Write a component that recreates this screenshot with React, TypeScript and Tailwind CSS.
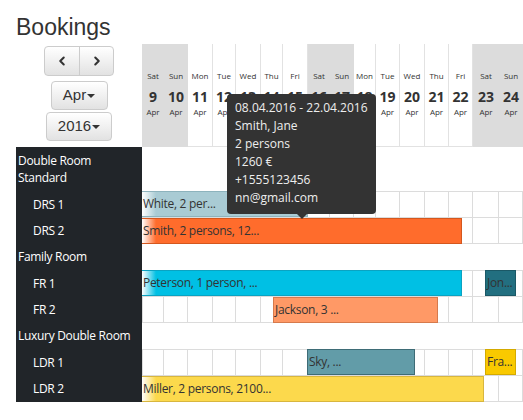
import { ChevronLeft, ChevronRight } from "lucide-react"

type Bar = { left: number; width: number; label: string; cls: string }
type Row = { kind: "group" | "room"; label: string; first?: boolean; bars?: Bar[] }

const days = [
  { name: "Sat", num: 9, weekend: true },
  { name: "Sun", num: 10, weekend: true },
  { name: "Mon", num: 11 },
  { name: "Tue", num: 12 },
  { name: "Wed", num: 13 },
  { name: "Thu", num: 14 },
  { name: "Fri", num: 15 },
  { name: "Sat", num: 16, weekend: true },
  { name: "Sun", num: 17, weekend: true },
  { name: "Mon", num: 18 },
  { name: "Tue", num: 19 },
  { name: "Wed", num: 20 },
  { name: "Thu", num: 21 },
  { name: "Fri", num: 22 },
  { name: "Sat", num: 23, weekend: true },
  { name: "Sun", num: 24, weekend: true },
]

const rows: Row[] = [
  { kind: "group", label: "Double Room Standard" },
  {
    kind: "room",
    label: "DRS 1",
    first: true,
    bars: [
      {
        left: 0,
        width: 166,
        label: "White, 2 per...",
        cls: "bg-[linear-gradient(to_right,#fff,#a9cbd4_14px)] border-[#8db3bd] border-l-0",
      },
    ],
  },
  {
    kind: "room",
    label: "DRS 2",
    bars: [
      {
        left: 0,
        width: 320,
        label: "Smith, 2 persons, 12...",
        cls: "bg-[linear-gradient(to_right,#fff,#ff6c2c_14px)] border-[#d4571e] border-l-0",
      },
    ],
  },
  { kind: "group", label: "Family Room" },
  {
    kind: "room",
    label: "FR 1",
    first: true,
    bars: [
      {
        left: 0,
        width: 320,
        label: "Peterson, 1 person, ...",
        cls: "bg-[linear-gradient(to_right,#fff,#00c0e4_14px)] border-[#0aa3c2] border-l-0",
      },
      { left: 343, width: 31, label: "Jon...", cls: "bg-[#226f80] border-[#1b5866]" },
    ],
  },
  {
    kind: "room",
    label: "FR 2",
    bars: [{ left: 131, width: 165, label: "Jackson, 3 ...", cls: "bg-[#ff9966] border-[#d67a4c]" }],
  },
  { kind: "group", label: "Luxury Double Room" },
  {
    kind: "room",
    label: "LDR 1",
    first: true,
    bars: [
      { left: 165, width: 108, label: "Sky, ...", cls: "bg-[#629ca8] border-[#3e6c76]" },
      { left: 343, width: 31, label: "Fra...", cls: "bg-[#f9c900] border-[#d4aa00]" },
    ],
  },
  {
    kind: "room",
    label: "LDR 2",
    bars: [
      {
        left: 0,
        width: 342,
        label: "Miller, 2 persons, 2100...",
        cls: "bg-[linear-gradient(to_right,#fff,#fcd94c_14px)] border-[#d8b63e] border-l-0",
      },
    ],
  },
]

function Caret() {
  return <span className="ml-[1px] inline-block border-x-[4px] border-t-[4px] border-x-transparent border-t-[#333]" />
}

function HeaderCell({ name, num, weekend }: { name: string; num: number; weekend?: boolean }) {
  return (
    <div
      className={
        weekend
          ? "flex flex-col items-center pt-[26px] bg-[#dcdcdc]"
          : "flex flex-col items-center pt-[26px] bg-white border-r border-b border-[#e2e2e2]"
      }
    >
      <span className="text-[8px] leading-[12px]">{name}</span>
      <span className="mt-[6px] text-[14px] leading-[18px] font-bold">{num}</span>
      <span className="text-[8px] leading-[12px]">Apr</span>
    </div>
  )
}

function RoomRow({ row }: { row: Row }) {
  if (row.kind === "group") {
    return (
      <div className="flex">
        <div
          className={
            row.label === "Double Room Standard"
              ? "w-[126px] h-[44px] bg-[#212529] text-white pl-[2px] pt-[5px] leading-[17px]"
              : "w-[126px] h-[26px] bg-[#212529] text-white pl-[2px] pt-[4px] leading-[17px] whitespace-nowrap"
          }
        >
          {row.label}
        </div>
        <div className="w-[381px]" />
      </div>
    )
  }

  return (
    <div className="flex">
      <div className="w-[126px] bg-[#212529] text-white pl-[17px] flex items-center">{row.label}</div>
      <div className="relative w-[381px]">
        <div
          className={
            row.first
              ? "grid grid-cols-[22px_24px_25px_23px_25px_22px_25px_22px_24px_22px_24px_25px_24px_24px_26px_24px] border-t border-[#dcdcdc]"
              : "grid grid-cols-[22px_24px_25px_23px_25px_22px_25px_22px_24px_22px_24px_25px_24px_24px_26px_24px]"
          }
        >
          {days.map((d, i) => (
            <div
              key={i}
              className={
                i === 0
                  ? "h-[26px] border-l border-r border-b border-[#dcdcdc]"
                  : "h-[26px] border-r border-b border-[#dcdcdc]"
              }
            />
          ))}
        </div>
        {row.bars?.map((b, i) => (
          <div
            key={i}
            className={"absolute top-0 h-[26px] border flex items-center pl-[1px] overflow-hidden whitespace-nowrap text-[#333] " + b.cls}
            style={{ left: b.left, width: b.width }}
          >
            {b.label}
          </div>
        ))}
      </div>
    </div>
  )
}

export default function App() {
  return (
    <div className="relative w-[523px] h-[420px] bg-white overflow-hidden pl-4 pt-[14px] text-[#333]">
      <h1 className="font-['Liberation_Sans',Arial,sans-serif] text-[23px] leading-[26px] mb-[4px]">Bookings</h1>

      <div className="font-['Open_Sans',sans-serif] text-[12px] tracking-[-0.3px]">
        {/* header */}
        <div className="flex h-[103px]">
          <div className="w-[126px] flex flex-col items-center font-['Liberation_Sans',Arial,sans-serif] tracking-normal">
            <div className="mt-[2px] w-[70px] h-[30px] flex rounded-[4px] border border-[#ccc] bg-[linear-gradient(to_bottom,#fff,#e2e2e2)]">
              <div className="w-[35px] flex items-center justify-center border-r border-[#ccc]">
                <ChevronLeft size={14} strokeWidth={3.5} />
              </div>
              <div className="flex-1 flex items-center justify-center">
                <ChevronRight size={14} strokeWidth={3.5} />
              </div>
            </div>
            <div className="mt-[5px] w-[57px] h-[29px] flex items-center justify-center rounded-[4px] border border-[#ccc] bg-[linear-gradient(to_bottom,#fff,#e2e2e2)] text-[15px]">
              Apr
              <Caret />
            </div>
            <div className="mt-[2px] w-[66px] h-[29px] flex items-center justify-center rounded-[4px] border border-[#ccc] bg-[linear-gradient(to_bottom,#fff,#e2e2e2)] text-[15px]">
              2016
              <Caret />
            </div>
          </div>
          <div className="w-[381px] grid grid-cols-[22px_24px_25px_23px_25px_22px_25px_22px_24px_22px_24px_25px_24px_24px_26px_24px] tracking-normal">
            {days.map((d, i) => (
              <HeaderCell key={i} name={d.name} num={d.num} weekend={d.weekend} />
            ))}
          </div>
        </div>

        {rows.map((r, i) => (
          <RoomRow key={i} row={r} />
        ))}
      </div>

      {/* tooltip */}
      <div className="absolute left-[227px] top-[94px] w-[149px] h-[120px] rounded-[4px] bg-[#333] text-[#eee] font-['Open_Sans',sans-serif] text-[12px] leading-[18px] px-[8px] pt-[5px]">
        <div>08.04.2016 - 22.04.2016</div>
        <div>Smith, Jane</div>
        <div>2 persons</div>
        <div>1260 €</div>
        <div>+1555123456</div>
        <div>nn@gmail.com</div>
        <span className="absolute left-[70px] top-[120px] border-x-[5px] border-t-[5px] border-x-transparent border-t-[#333]" />
      </div>
    </div>
  )
}
